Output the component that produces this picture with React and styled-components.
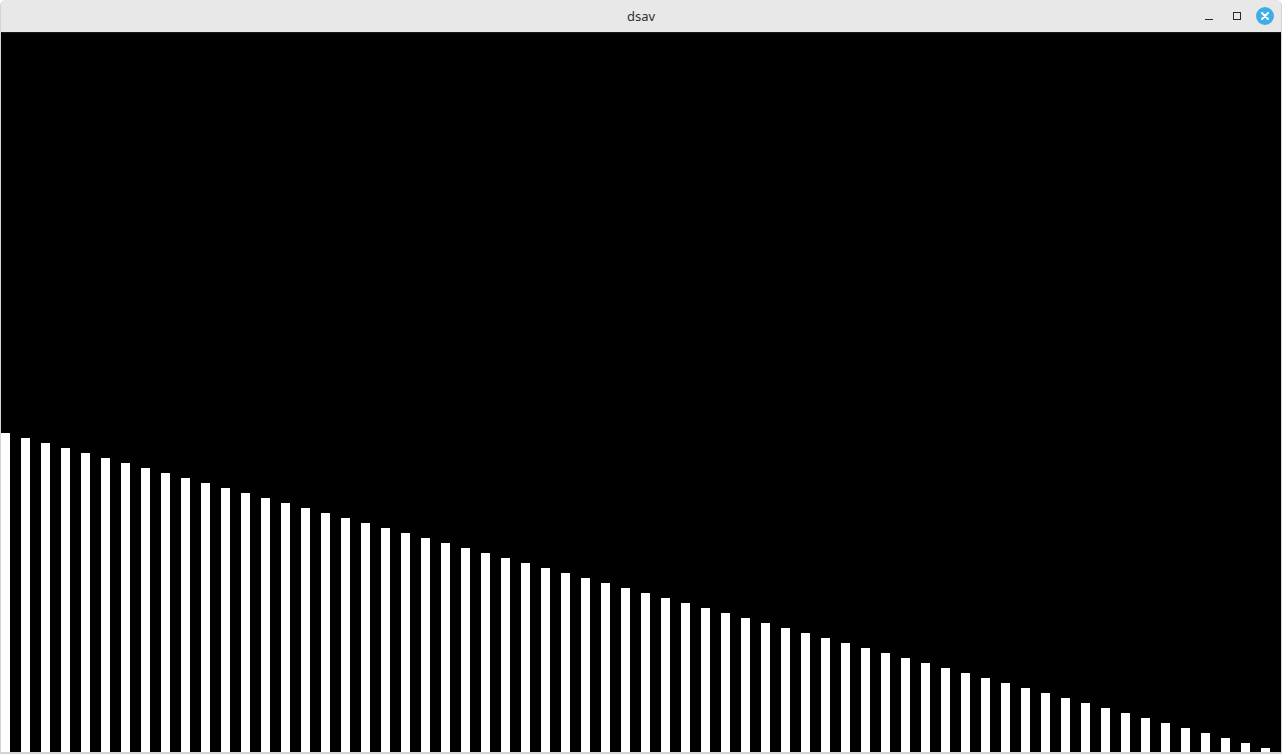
import React from "react";
import styled, { createGlobalStyle } from "styled-components";

const Global = createGlobalStyle`
  html, body { margin: 0; padding: 0; background: #ffffff; }
  body { font-family: "Noto Sans", "Open Sans", sans-serif; }
`;

const Window = styled.div`
  width: 1282px;
  height: 754px;
  box-sizing: border-box;
  display: flex;
  flex-direction: column;
  background: #e3e3e3;
  border-radius: 6px 6px 0 0;
  overflow: hidden;
  border-left: 1px solid #d4d4d4;
  border-right: 1px solid #d4d4d4;
  border-bottom: 2px solid #d4d4d4;
`;

const TitleBar = styled.div`
  height: 33px;
  flex: none;
  display: grid;
  grid-template-columns: 1fr auto 1fr;
  align-items: center;
  background: #e8e8e8;
  border-bottom: 1px solid #1a1a1a;
  box-sizing: border-box;
`;

const Title = styled.div`
  grid-column: 2;
  font-size: 13px;
  color: #303030;
`;

const Controls = styled.div`
  grid-column: 3;
  justify-self: end;
  display: flex;
  align-items: center;
  gap: 10px;
  padding-right: 7px;
`;

const Ctl = styled.div`
  width: 18px;
  height: 18px;
  display: flex;
  align-items: center;
  justify-content: center;
`;

const Canvas = styled.div`
  flex: 1;
  background: #000000;
  display: flex;
  align-items: flex-end;
  gap: 11px;
`;

const Bar = styled.div`
  width: 9px;
  flex: none;
  background: #ffffff;
`;

const bars = Array.from({ length: 64 }, (_, i) => 319 - 5 * i);

export default function App() {
  return (
    <>
      <Global />
      <Window>
        <TitleBar>
          <Title>dsav</Title>
          <Controls>
            <Ctl>
              <svg width="18" height="18" viewBox="0 0 18 18">
                <line x1="5" y1="12.5" x2="13" y2="12.5" stroke="#2a2a2a" strokeWidth="1" />
              </svg>
            </Ctl>
            <Ctl>
              <svg width="18" height="18" viewBox="0 0 18 18">
                <rect x="5.5" y="5.5" width="7" height="7" fill="none" stroke="#2a2a2a" strokeWidth="1" />
              </svg>
            </Ctl>
            <Ctl>
              <svg width="18" height="18" viewBox="0 0 18 18">
                <circle cx="9" cy="9" r="9" fill="#3daee9" />
                <path d="M6 6 L12 12 M12 6 L6 12" stroke="#ffffff" strokeWidth="2" strokeLinecap="round" />
              </svg>
            </Ctl>
          </Controls>
        </TitleBar>
        <Canvas>
          {bars.map((h, i) => (
            <Bar key={i} style={{ height: h }} />
          ))}
        </Canvas>
      </Window>
    </>
  );
}
